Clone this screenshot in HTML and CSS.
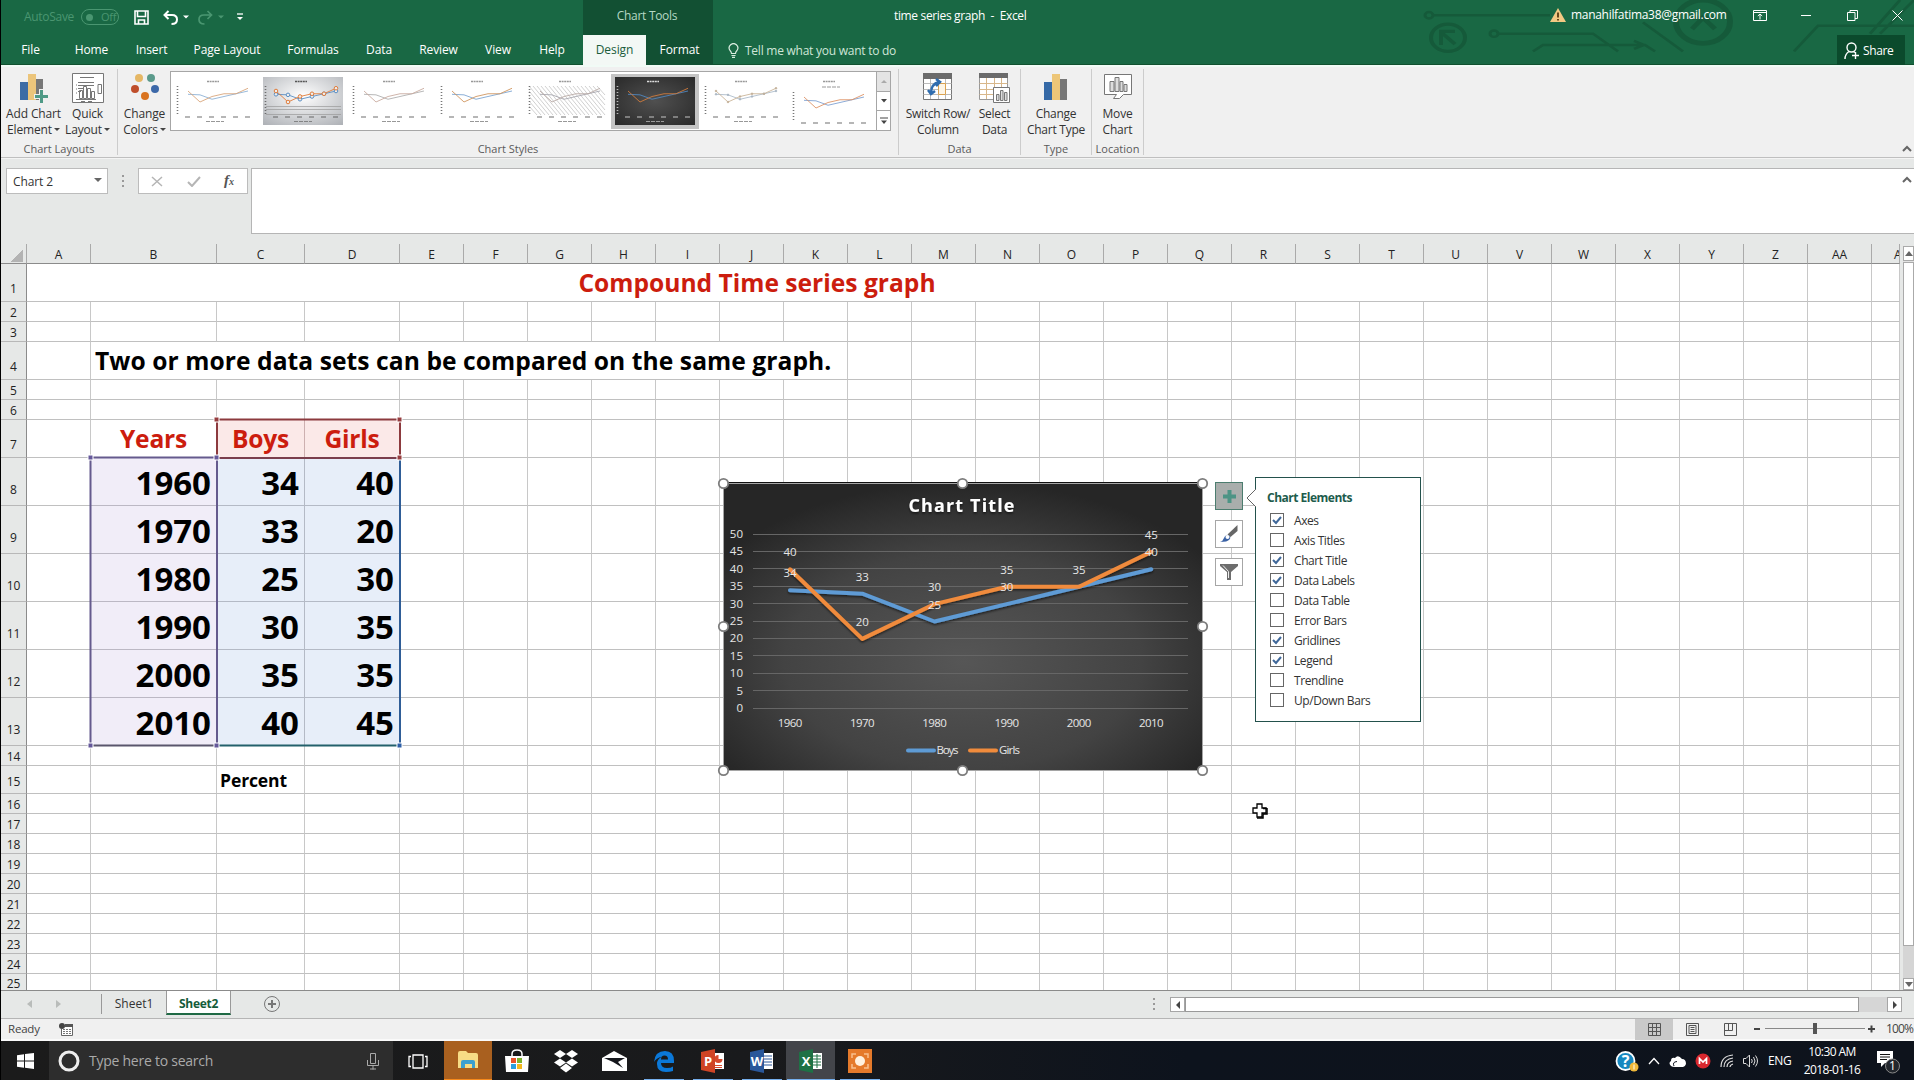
FILE: index.html
```html
<!DOCTYPE html>
<html lang="en">
<head>
<meta charset="utf-8">
<title>time series graph - Excel</title>
<link rel="stylesheet" href="styles.css">
</head>
<body>
<div class="app">
  <header class="top">
    <svg class="circuit" width="514" height="65" viewBox="1400 0 514 81" preserveAspectRatio="none" fill="none" stroke="#155a3a" stroke-width="3">
      <circle cx="1429" cy="19" r="4"/><path d="M1433 19H1550"/><circle cx="1448" cy="47" r="17" stroke-width="4"/><path d="M1441 56V39H1455M1441 40l14 15" stroke-width="4"/>
      <circle cx="1494" cy="42" r="4"/><path d="M1498 42H1593L1618 64M1533 64l10-8H1645l10 8M1634 51l10 5-10 5M1643 28l40 36"/>
      <circle cx="1703" cy="27" r="27" stroke-width="6"/><path d="M1692 36l11-14 12 14M1692 22h22" stroke-width="5"/><path d="M1794 64l24-32H1914M1870 42l30-42M1880 42l34-42"/>
    </svg>
    <div class="quick">
      <span class="autosave">AutoSave</span><span class="toggle"><i></i>Off</span>
      <svg class="q-save" width="15" height="15" viewBox="0 0 15 15" fill="none" stroke="#fff" stroke-width="1.6"><path d="M1 1h13v13H1zM3.5 1v5.5h8V1M4.5 14v-4h6v4"/></svg>
      <svg class="q-undo" width="29" height="15" viewBox="0 0 29 15"><path d="M5.500 1L1.500 5l4 4M2 5h7q5 0 5 4.500T8.500 14" fill="none" stroke="#fff" stroke-width="2"/><path d="M20 5.500h6l-3 3z" fill="#fff"/></svg>
      <svg class="q-redo" width="29" height="15" viewBox="0 0 29 15"><path d="M9.500 1l4 4-4 4M13 5H6Q1 5 1 9.500T6.500 14" fill="none" stroke="#4a9671" stroke-width="1.700"/><path d="M20 5.500h6l-3 3z" fill="#4a9671"/></svg>
      <svg class="q-more" width="6" height="8" viewBox="0 0 6 8"><path d="M0 1h6" stroke="#fff" stroke-width="1.300"/><path d="M0 4h6L3 7z" fill="#fff"/></svg>
    </div>
    <div class="context">Chart Tools</div>
    <div class="doc-title">time series graph&nbsp; -&nbsp; Excel</div>
    <div class="account">
      <svg width="16" height="14" viewBox="0 0 16 14"><path d="M8 0l8 14H0z" fill="#f3c983"/><path d="M8 4.500v5M8 11v1.500" stroke="#5a3a10" stroke-width="1.800"/></svg>
      <span>manahilfatima38@gmail.com</span>
    </div>
    <div class="window-btns">
      <svg width="14" height="11" viewBox="0 0 14 11" fill="none" stroke="#fff"><path d="M.5.5h13v10H.5zM.5 2.500h13M7 9.500V4M4.800 6L7 4l2.200 2"/></svg>
      <svg width="11" height="11" viewBox="0 0 11 11" stroke="#fff"><path d="M0 5.500h10"/></svg>
      <svg width="11" height="11" viewBox="0 0 11 11" fill="none" stroke="#fff"><path d="M.5 2.500h7.500v8H.5zM3 2.500v-2h7.500v8H8"/></svg>
      <svg width="11" height="11" viewBox="0 0 11 11" stroke="#fff"><path d="M.5.5l10 10M10.500.5l-10 10"/></svg>
    </div>
    <nav class="tabs">
      <span>File</span><span>Home</span><span>Insert</span><span>Page Layout</span><span>Formulas</span><span>Data</span><span>Review</span><span>View</span><span>Help</span><b></b><span class="active">Design</span><span class="ctx">Format</span>
      <div class="tell"><svg width="11" height="15" viewBox="0 0 11 15" fill="none" stroke="#d9ecdf" stroke-width="1.200"><path d="M3.500 10.500Q3.500 9 2 7.500A4.300 4.300 0 1 1 9 7.500Q7.500 9 7.500 10.500zM3.500 12.500h4M4 14.300h3"/></svg>Tell me what you want to do</div>
      <div class="share"><svg width="16" height="18" viewBox="0 0 16 18" fill="none" stroke="#fff" stroke-width="1.400"><circle cx="7.500" cy="5.500" r="4.500"/><path d="M1 17q0-5 4-7.500M9.500 9.500l1.500 1M11.500 10v7M8 13.500h7"/></svg>Share</div>
    </nav>
  </header>

  <section class="ribbon">
    <div class="group g1">
      <div class="btns">
        <div class="btn"><svg width="30" height="32" viewBox="0 0 30 32"><path d="M1 9h8v18H1z" fill="#3d6ca5"/><path d="M9 1h8v26H9z" fill="#ecc57b"/><path d="M17 6h7v21h-7z" fill="#777"/><path d="M20 16h5v5h5v5h-5v5h-5v-5h-5v-5h5z" fill="#f0f0f0"/><path d="M21 17h3v5h5v3h-5v5h-3v-5h-5v-3h5z" fill="#4f9a86"/></svg><span>Add Chart<br>Element <i></i></span></div>
        <div class="btn"><svg width="32" height="32" viewBox="0 0 32 32" fill="none" stroke="#777"><path d="M.5.500h31v29H.500z" fill="#fff"/><path d="M8 4.500h14M6 9.500h16M6 12.500h16M6 15.500h5M6 18.500h3M4 26.500h20M9 28.500h4M16 28.500h4M4 12h1M4 16h1M4 20h1"/><path d="M7.500 17.500h3v8h-3zM11.500 13.500h3v12h-3zM15.500 15.500h3v10h-3zM19.500 18.500h3v7h-3zM26 11.500h3.500v9H26z"/></svg><span>Quick<br>Layout <i></i></span></div>
      </div>
      <em>Chart Layouts</em>
    </div>
    <div class="group g2">
      <div class="btns">
        <div class="btn"><svg width="30" height="32" viewBox="0 0 30 32"><circle cx="9" cy="5" r="4" fill="#e5b765"/><circle cx="21" cy="5" r="4" fill="#5b9a8b"/><circle cx="5" cy="16" r="4" fill="#bf4e2b"/><circle cx="25" cy="16" r="4" fill="#3c68a8"/><circle cx="15" cy="23" r="4" fill="#d9731f"/></svg><span>Change<br>Colors <i></i></span></div>
        <div class="gallery"><div class="thumbs" id="thumbs"></div>
          <div class="gscroll"><b class="off"><svg width="6" height="4"><path d="M0 4l3-3 3 3z" fill="#aaa"/></svg></b><b><svg width="6" height="4"><path d="M0 0h6L3 3.500z" fill="#444"/></svg></b><b><svg width="8" height="8"><path d="M0 1h8" stroke="#444"/><path d="M1 3.500h6L4 7z" fill="#444"/></svg></b></div>
        </div>
      </div>
      <em>Chart Styles</em>
    </div>
    <div class="group g3">
      <div class="btns">
        <div class="btn"><svg width="30" height="32" viewBox="0 0 30 32" fill="none"><path d="M.5.500h28v26H.500z" fill="#fff" stroke="#777"/><path d="M0 0h29v6H0z" fill="#6b6b6b"/><path d="M.5 10.500h28M.5 16.500h28M.5 21.500h28M7.500 6v20M15.500 6v20M22.500 6v20" stroke="#bbb"/><path d="M15.500 10.500h7v11h-7z" stroke="#dba24f" fill="#fdf5e6"/><path d="M8 20q0-9 8-11M13 6l4 3-4 4M5 17l3 4 4-3" stroke="#2f6cae" stroke-width="2.500"/></svg><span>Switch Row/<br>Column</span></div>
        <div class="btn"><svg width="31" height="32" viewBox="0 0 31 32" fill="none"><path d="M.5.500h28v26H.500z" fill="#fff" stroke="#999"/><path d="M0 0h29v5H0z" fill="#6b6b6b"/><path d="M.5 10.500h28M.5 16.500h28M.5 21.500h28M7.500 5v21M15.500 5v21M22.500 5v21" stroke="#d8b78a"/><path d="M14.500 14.500h16v15h-16z" fill="#fff" stroke="#777"/><path d="M17.500 21.500h2.500v6h-2.500zM21.500 17.500H24v10h-2.500zM25.500 19.500H28v8h-2.500z" stroke="#777" fill="#ddd"/></svg><span>Select<br>Data</span></div>
      </div>
      <em>Data</em>
    </div>
    <div class="group g4">
      <div class="btns"><div class="btn"><svg width="24" height="32" viewBox="0 0 24 32"><path d="M0 9h8v18H0z" fill="#3569a6"/><path d="M8 1h8v26H8z" fill="#edc678"/><path d="M16 6h7v21h-7z" fill="#777"/></svg><span>Change<br>Chart Type</span></div></div>
      <em>Type</em>
    </div>
    <div class="group g5">
      <div class="btns"><div class="btn"><svg width="28" height="32" viewBox="0 0 28 32" fill="none" stroke="#777"><path d="M.5 1.500h27v20h-8l-4 4H9.500l3-4H.5z" fill="#fff"/><path d="M6 8.500h4v10H6zM11 4.500h4v14h-4zM16 8.500h3v10h-3zM20 11.500h3v7h-3z" fill="#ddd"/></svg><span>Move<br>Chart</span></div></div>
      <em>Location</em>
    </div>
    <svg class="collapse" width="10" height="7" viewBox="0 0 10 7"><path d="M1 6l4-4 4 4" fill="none" stroke="#666" stroke-width="2"/></svg>
  </section>

  <section class="formula">
    <div class="namebox">Chart 2<i></i></div>
    <div class="dots"><i></i><i></i><i></i></div>
    <div class="fxbox">
      <svg width="12" height="11" viewBox="0 0 12 11"><path d="M1 1l10 9M11 1L1 10" stroke="#b5b5b5" stroke-width="1.500"/></svg>
      <svg width="14" height="11" viewBox="0 0 14 11"><path d="M1 6l4 4 8-9" fill="none" stroke="#b5b5b5" stroke-width="2"/></svg>
      <span>f<small>x</small></span>
    </div>
    <div class="input"><svg width="10" height="7" viewBox="0 0 10 7"><path d="M1 6l4-4 4 4" fill="none" stroke="#666" stroke-width="2"/></svg></div>
  </section>

  <main class="sheet">
    <table id="grid"></table>
    <div class="vscroll">
      <b><svg width="8" height="5"><path d="M0 5l4-5 4 5z" fill="#666"/></svg></b><div class="vthumb"></div><div class="vtrack"></div><b><svg width="8" height="5"><path d="M0 0h8L4 5z" fill="#666"/></svg></b>
    </div>

    <svg class="ranges" width="320" height="340" viewBox="85 415 320 340" fill="none" stroke-width="2">
      <path d="M217 457V419.500H400V457" stroke="#8c3a3e"/><path d="M217 458H400" stroke="#7a3e4c"/>
      <path d="M90.500 745V457.500H217M217 458V745" stroke="#655a8d"/><path d="M90 745.500H217" stroke="#5a566c"/>
      <path d="M400 458V745" stroke="#2f5d97"/><path d="M217 745.500H400" stroke="#23606b"/>
      <g stroke="#fff" stroke-width="1"><path d="M214 417h5v5h-5zM397 417h5v5h-5zM397 455h5v5h-5z" fill="#963c3e"/><path d="M88 455h5v5h-5zM214 455h5v5h-5zM88 743h5v5h-5zM214 743h5v5h-5z" fill="#65589a"/><path d="M397 743h5v5h-5z" fill="#2d5ea6"/></g>
    </svg>

    <svg class="chart" width="492" height="300" viewBox="717 477 492 300">
      <defs><radialGradient id="dark" cx=".5" cy=".62" r=".62"><stop offset="0" stop-color="#565656"/><stop offset=".6" stop-color="#434343"/><stop offset="1" stop-color="#262626"/></radialGradient>
      <filter id="sh" x="-10%" y="-20%" width="120%" height="150%"><feDropShadow dx="0" dy="1.500" stdDeviation="1.200" flood-color="#000" flood-opacity=".6"/></filter></defs>
      <rect x="723" y="482" width="480" height="289" fill="url(#dark)"/>
      <path d="M723 482.500H1203" stroke="#111"/><path d="M723.500 483.500H1202.500V770.500H723.500z" fill="none" stroke="#a5a5a5"/>
      <g id="plot"></g>
    </svg>

    <div class="side">
      <b class="on"><svg width="15" height="15" viewBox="0 0 15 15"><path d="M5.500 1h4v4.500H14v4H9.500V14h-4V9.500H1v-4h4.500z" fill="#4d9485"/></svg></b>
      <b><svg width="20" height="18" viewBox="0 0 20 18"><path d="M18.500 0v6l-7 6-3-2.500z" fill="#666"/><path d="M1 17q3-1 4-4t4.500-3q3 2 1 4.500T1 17z" fill="#3b62a5"/><circle cx="8.500" cy="12" r="2" fill="#fff"/></svg></b>
      <b><svg width="20" height="18" viewBox="0 0 20 18"><path d="M1 1h18v2l-7 6v8H8V9L1 3z" fill="#6d6d6d"/><path d="M4 2.500l5.500 6V15" fill="none" stroke="#eee"/></svg></b>
    </div>
    <div class="panel">
      <svg class="tip" width="10" height="18" viewBox="0 0 10 18"><path d="M10 0L1 9l9 9" fill="#fff" stroke="#666"/></svg>
      <h3>Chart Elements</h3>
      <ul id="elements"></ul>
    </div>
    <svg class="cursor" width="16" height="16" viewBox="0 0 16 16"><path d="M5 1h5v4h4v5h-4v4H5v-4H1V5h4z" fill="#fff" stroke="#000" stroke-width="1.300"/><path d="M11 5.500h4M15 5v6h-4v4H5" stroke="#000" stroke-width="1.500" fill="none"/></svg>
  </main>

  <section class="sheettabs">
    <div class="arrows"><svg width="34" height="8" viewBox="0 0 34 8"><path d="M5 0v8L0 4zM29 0v8l5-4z" fill="#b9bcba"/></svg></div>
    <span class="tab">Sheet1</span><span class="tab cur">Sheet2</span>
    <svg class="add" width="18" height="18" viewBox="0 0 18 18" fill="none" stroke="#777"><circle cx="9" cy="9" r="7.500"/><path d="M9 5v8M5 9h8" stroke-width="2"/></svg>
    <div class="dots"><i></i><i></i><i></i></div>
    <div class="hscroll"><b><svg width="4" height="8"><path d="M4 0v8L0 4z" fill="#444"/></svg></b><div class="hthumb"></div><div class="htrack"></div><b><svg width="4" height="8"><path d="M0 0v8l4-4z" fill="#444"/></svg></b></div>
  </section>

  <footer class="status">
    <span class="ready">Ready</span>
    <svg class="macro" width="14" height="13" viewBox="0 0 14 13"><path d="M2.500 6v6.500h11V1.500H6" fill="#fff" stroke="#666"/><path d="M6 1h8v3H6z" fill="#555"/><circle cx="3" cy="3" r="3" fill="#444"/><path d="M4 6.500h8M4 8.500h8M4 10.500h8" stroke="#777" stroke-dasharray="2 1"/></svg>
    <div class="views">
      <b class="on"><svg width="13" height="13" viewBox="0 0 13 13" fill="none" stroke="#555"><path d="M.5.500h12v12H.500zM4.500.500v12M8.500.500v12M.5 4.500h12M.5 8.500h12"/></svg></b>
      <b><svg width="13" height="13" viewBox="0 0 13 13" fill="none" stroke="#555"><path d="M.5.500h12v12H.500zM3 2.500h7v8H3zM4.500 4.500h4M4.500 6.500h4M4.500 8.500h4"/></svg></b>
      <b><svg width="13" height="13" viewBox="0 0 13 13" fill="none" stroke="#555"><path d="M.5.500h12v12H.500zM4.500.500v7M8.500.500v7M.5 7.500h8"/></svg></b>
    </div>
    <svg class="zoomer" width="122" height="12" viewBox="0 0 122 12"><path d="M1 6h6M115 6h7M118.500 2.500v7" stroke="#444" stroke-width="2"/><path d="M12 5.500h100" stroke="#888"/><path d="M60 0h4v11h-4z" fill="#555"/></svg>
    <span class="pct">100%</span>
  </footer>

  <footer class="taskbar">
    <div class="start"><svg width="17" height="16" viewBox="0 0 17 16" fill="#fff"><path d="M0 2.300l7-1v6.200H0zM8 1.100L17 0v7.500H8zM0 8.500h7v6.200l-7-1zM8 8.500h9V16l-9-1.200z"/></svg></div>
    <div class="search"><svg width="22" height="22" viewBox="0 0 22 22"><circle cx="11" cy="11" r="9" fill="none" stroke="#eee" stroke-width="3"/></svg><span>Type here to search</span><svg width="12" height="17" viewBox="0 0 12 17" fill="none" stroke="#aaa"><path d="M3.500.5h5v10h-5zM.5 7v5.500h11V7M6 12.500v4M3 16h6"/></svg></div>
    <div class="tile"><svg width="20" height="15" viewBox="0 0 20 15" fill="none" stroke="#fff" stroke-width="1.300"><path d="M5 1h10v13H5zM3 2.500H1v10h2M17 2.500h2v10h-2"/></svg></div>
    <div class="tile explorer"><svg width="22" height="20" viewBox="0 0 22 20"><path d="M1 3q0-2 2-2h6l2 2h8q2 0 2 2v13H1z" fill="#f7dc85"/><path d="M4 18v-6q0-2 2-2h10q2 0 2 2v6h-3v-4H8v4z" fill="#3ba0d0"/></svg></div>
    <div class="tile"><svg width="24" height="24" viewBox="0 0 24 24"><path d="M7 8V5q0-4 5-4t5 4v3" fill="none" stroke="#fff" stroke-width="1.500"/><path d="M0 7h24l-1 16H1z" fill="#fff"/><path d="M6 9h5v5H6z" fill="#e8532b"/><path d="M12 9h5v5h-5z" fill="#7db32b"/><path d="M6 15h5v5H6z" fill="#2c9fe0"/><path d="M12 15h5v5h-5z" fill="#f4b81e"/></svg></div>
    <div class="tile"><svg width="24" height="23" viewBox="0 0 24 23" fill="#fff"><path d="M6 0l6 4-6 4-6-4zM18 0l6 4-6 4-6-4zM6 8.500l6 4-6 4-6-4zM18 8.500l6 4-6 4-6-4zM12 13.500l6 4.500-6 4.500L6 18z"/></svg></div>
    <div class="tile"><svg width="25" height="20" viewBox="0 0 25 20"><path d="M0 7l12-7 13 7v13H0z" fill="#fff"/><path d="M2 7h21l-7 4 5 6-10-6z" fill="#15171c"/></svg></div>
    <div class="tile run"><svg width="22" height="22" viewBox="0 0 22 22"><path d="M1 12Q2 1 12 1q9 0 9 10v2H8q0 5 6 5 4 0 6-1.500V21q-3 1-7 1-9 0-9-8 0-5 5-7.500Q3 8 1 12zM8 9.500h7q0-4-3.500-4T8 9.500z" fill="#0b78d8"/></svg></div>
    <div class="tile run"><svg width="24" height="24" viewBox="0 0 24 24"><path d="M12 4h11v16H12z" fill="#fff"/><path d="M14 16.500h7M14 18.500h7" stroke="#d6492c"/><path d="M17.500 6v4h4a4 4 0 1 1-4-4z" fill="#d6492c"/><path d="M0 3l14-3v24L0 21z" fill="#cf4425"/><text x="7" y="17" class="glyph">P</text></svg></div>
    <div class="tile run"><svg width="24" height="24" viewBox="0 0 24 24"><path d="M12 4h11v16H12z" fill="#fff"/><path d="M14 7h8M14 10h8M14 13h8M14 16h8" stroke="#2a579a"/><path d="M0 3l14-3v24L0 21z" fill="#2a579a"/><text x="7" y="17" class="glyph">W</text></svg></div>
    <div class="tile run cur"><svg width="24" height="24" viewBox="0 0 24 24"><path d="M12 4h11v16H12z" fill="#fff"/><path d="M14 7h8M14 10h8M14 13h8M14 16h8M18 5v14" stroke="#217346"/><path d="M0 3l14-3v24L0 21z" fill="#1e7145"/><text x="7" y="17" class="glyph">X</text></svg></div>
    <div class="tile run"><svg width="24" height="24" viewBox="0 0 24 24"><path d="M0 0h24v24H0z" fill="#e57a2b"/><path d="M4 9V5h4M16 5h4v4M20 15v4h-4M8 19H4v-4" fill="none" stroke="#f8c08e" stroke-width="1.500"/><circle cx="12" cy="12" r="5" fill="#fff1df"/></svg></div>
    <div class="tray">
      <svg width="24" height="22" viewBox="0 0 24 22"><circle cx="10.500" cy="11" r="9" fill="#1788c0" stroke="#fff" stroke-width="1.800"/><text x="10.500" y="17" class="q">?</text><circle cx="19" cy="17" r="4.500" fill="#f0b93a"/><path d="M19 14.500v5" stroke="#fff"/></svg>
      <svg width="12" height="8" viewBox="0 0 12 8"><path d="M1 7l5-5.500L11 7" fill="none" stroke="#fff" stroke-width="1.300"/></svg>
      <svg width="17" height="11" viewBox="0 0 17 11"><path d="M2 10Q-1 7 2 5q0-4 4-3 3-4 7 1 4 0 4 5-1 3-3 3H6Q3 11 2 10z" fill="#fff"/><path d="M5 10Q3 6 8 5.500" fill="none" stroke="#111722"/></svg>
      <svg width="16" height="16" viewBox="0 0 16 16"><circle cx="8" cy="8" r="7.500" fill="#d9272e"/><path d="M4.500 11V5.500L8 9l3.500-3.500V11" fill="none" stroke="#fff" stroke-width="1.700"/></svg>
      <svg width="14" height="14" viewBox="0 0 14 14" fill="none" stroke="#ddd" stroke-width="1.200"><path d="M1 13Q1 2 13 1M4 13q0-8 9-9M7 13q0-5 6-6M10 13q0-2 3-3"/></svg>
      <svg width="15" height="14" viewBox="0 0 15 14" fill="none" stroke="#ddd"><path d="M.5 4.500H3L6.500 1v12L3 9.500H.500zM8.500 5q1.500 2 0 4M10.500 3q3 4 0 8M12.500 1.500q4 5.500 0 11"/></svg>
      <span class="lang">ENG</span>
      <span class="clock">10:30 AM<br>2018-01-16</span>
      <svg width="26" height="26" viewBox="0 0 26 26"><path d="M1 3h16v12h-8l-4 4v-4H1z" fill="#fff"/><path d="M4 6.500h10M4 9h10M4 11.500h7" stroke="#111"/><circle cx="16.500" cy="18" r="7" fill="#22262c" stroke="#888"/><text x="16.500" y="22" class="n">1</text></svg>
    </div>
  </footer>
</div>
<script src="app.js"></script>
</body>
</html>
```
FILE: styles.css
```css
* { box-sizing: border-box; }
body { margin: 0; font: 12px/16px "Open Sans", "Noto Sans", sans-serif; color: #333; background: #e6e8e7; }
svg { display: block; flex: none; }
b, em, i { font-weight: normal; font-style: normal; }
.app { width: 1914px; height: 1080px; overflow: hidden; border-left: 1px solid #000; display: flex; flex-direction: column; position: relative; }

.top { height: 65px; flex: none; background: #196844; color: #fff; position: relative; display: grid; grid-template: 35px 30px / 582px 130px 1fr auto auto; border-bottom: 1px solid #11512f; }
.circuit { position: absolute; right: 0; top: 0; }
.quick { display: flex; align-items: center; padding: 0 0 1px 23px; color: #4a9671; }
.autosave { width: 57px; letter-spacing: -.3px; }
.toggle { width: 38px; height: 16px; border: 1px solid #4a9671; border-radius: 8px; display: flex; align-items: center; gap: 8px; padding-left: 4px; font-size: 11px; letter-spacing: -.3px; }
.toggle i { width: 7px; height: 7px; border-radius: 50%; background: #4a9671; }
.q-save { margin-left: 15px; }
.q-undo { margin-left: 14px; }
.q-redo { margin-left: 6px; }
.q-more { margin-left: 10px; }
.context { background: #125033; color: #b5d8c4; text-align: center; padding: 8px 2px 0 0; letter-spacing: -.3px; }
.doc-title { padding: 8px 0 0 181px; letter-spacing: -.35px; white-space: nowrap; }
.account { display: flex; gap: 5px; align-items: center; padding-bottom: 5px; position: relative; letter-spacing: -.3px; width: 179px; margin-right: 24px; white-space: nowrap; }
.window-btns { display: flex; align-items: center; justify-content: space-between; width: 161px; padding: 0 11px 5px 0; position: relative; }
.tabs { grid-column: 1 / -1; display: grid; grid-template-columns: 59px 63px 57px 94px 78px 54px 65px 54px 54px 4px 63px 67px 1fr 68px; position: relative; padding-right: 9px; line-height: 29px; text-align: center; letter-spacing: -.1px; }
.tabs .active { background: #f3f8f5; color: #1a5c3c; height: 31px; }
.tabs .ctx { background: #125033; }
.tell { display: flex; align-items: center; gap: 6px; padding-left: 15px; color: #cfe6d8; letter-spacing: -.25px; }
.share { background: #0b4a2c; display: flex; align-items: center; gap: 3px; padding-left: 7px; letter-spacing: -.4px; }

.ribbon { height: 93px; flex: none; background: #f0f0f0; border-top: 2px solid #f1fbf6; border-bottom: 1px solid #bfbfbf; display: flex; position: relative; padding-top: 2px; }
.group { border-right: 1px solid #ccc; height: 86px; display: flex; flex-direction: column; justify-content: space-between; }
.group em { text-align: center; color: #5a5a5a; font-size: 11px; line-height: 12px; }
.g1 { width: 117px; } .g2 { width: 781px; } .g3 { width: 122px; } .g4 { width: 71px; } .g5 { width: 52px; }
.btns { display: flex; }
.btn { display: flex; flex-direction: column; align-items: center; padding-top: 4px; white-space: nowrap; text-align: center; letter-spacing: -.15px; width: 53px; }
.btn svg { height: 32px; margin-bottom: 1px; }
.btn span { display: block; }
.btn i, .namebox i { display: inline-block; border: 3px solid transparent; border-top: 3px solid #444; border-bottom: 0; vertical-align: 3px; margin-left: -1px; }
.g1 .btns { padding-left: 6px; }
.g1 .btn + .btn { width: 55px; }
.g2 .btn { width: 51px; margin-left: 1px; }
.g3 .btn { width: 78px; letter-spacing: -.3px; } .g3 .btn + .btn { width: 35px; }
.g4 .btn { width: 70px; letter-spacing: -.25px; } .g5 .btn { width: 51px; }
.gallery { display: flex; border: 1px solid #a6a6a6; background: #fff; width: 721px; height: 60px; margin: 2px 0 0 0; }
.thumbs { display: flex; flex: 1; }
.thumb { width: 88px; padding: 5px 4px; height: 58px; }
.thumb.sel { background: #c4c4c4; height: 55px; margin-top: 2px; padding-top: 3px; }
.gscroll { width: 14px; border-left: 1px solid #a6a6a6; display: flex; flex-direction: column; }
.gscroll b { flex: 1; display: flex; align-items: center; justify-content: center; border-bottom: 1px solid #a6a6a6; }
.gscroll b:last-child { border: 0; }
.gscroll .off { background: #e4e4e4; }
.collapse { position: absolute; right: 2px; bottom: 5px; }

.formula { height: 86px; flex: none; background: #e6e8e7; border-top: 1px solid #f4f4f4; display: flex; padding: 9px 0 0 5px; }
.namebox { width: 102px; height: 26px; border: 1px solid #bcbcbc; background: #fff; padding: 0 6px; line-height: 25px; display: flex; justify-content: space-between; align-items: center; letter-spacing: -.1px; }
.namebox i { border-width: 4px 4px 0; border-top-color: #666; margin: -2px -1px 0 0; }
.dots { display: flex; flex-direction: column; gap: 3px; width: 2px; margin: 7px 14px; }
.dots i { width: 2px; height: 2px; background: #999; }
.fxbox { width: 110px; height: 26px; border: 1px solid #bcbcbc; background: #fff; display: flex; align-items: center; justify-content: space-between; padding: 0 13px 0 12px; }
.fxbox span { font: italic bold 15px/20px "Liberation Serif", serif; color: #555; }
.fxbox small { font-size: 10px; }
.input { flex: 1; height: 66px; margin-left: 3px; border: 1px solid #b5b5b5; border-right: 0; background: #fff; position: relative; }
.input svg { position: absolute; right: 2px; top: 7px; }

.sheet { height: 747px; flex: none; display: flex; position: relative; overflow: hidden; border-bottom: 1px solid #8b8b8b; }
#grid { table-layout: fixed; border-collapse: separate; border-spacing: 0; width: 1899px; height: 0; background: #fff; flex: none; }
#grid td, #grid th { padding: 0; border-right: 1px solid #c8c8c8; border-bottom: 1px solid #c0c0c0; overflow: hidden; white-space: nowrap; font-weight: normal; color: #222; line-height: 16px; }
#grid th { background: #e6e8e7; }
#grid thead th { border-right-color: #aaa; border-bottom-color: #8b8b8b; padding-top: 3px; text-align: center; }
#grid thead th:last-child { text-align: left; padding-left: 22px; }
#grid tbody th { border-right-color: #8b8b8b; border-bottom-color: #b8b8b8; vertical-align: bottom; text-align: center; }
#grid .h38 th { padding-bottom: 4px; }
#grid .h48 th { padding-bottom: 7px; }
#grid .h28 th { padding-bottom: 3px; }
#grid .h17 th { line-height: 12px; padding-top: 4px; }
#grid tbody td { font-weight: bold; color: #000; vertical-align: bottom; }
#grid tbody td.red { color: #cc1d0e; font-size: 24.6px; line-height: 36px; text-align: center; letter-spacing: -.2px; }
#grid tbody td.title { letter-spacing: 0; }
#grid tbody td.lead { font-size: 24.6px; line-height: 36px; padding-left: 4px; letter-spacing: .07px; }
#grid tbody td.num { font-size: 33px; line-height: 44px; text-align: right; padding-right: 5px; }
#grid tbody td.pink { background: #fbe9e8; border-right-color: #cdb0b0; }
#grid tbody td.lilac { background: #f1edf8; border-color: #bcb8c4; }
#grid tbody td.blue { background: #e7eef9; border-color: #b4bac6; }
#grid tbody td.pct-label { font-size: 17.5px; line-height: 26px; padding-left: 3px; letter-spacing: -.1px; }
.corner { display: block; width: 13px; height: 13px; margin: 0 3px 0 auto; background: linear-gradient(135deg, transparent 50%, #b3b3b3 50%); }
.vscroll { flex: 1; margin: 2px 0 0 3px; display: flex; flex-direction: column; background: #e2e2e2; }
.vscroll b { height: 15px; border: 1px solid #aaa; background: #fff; display: flex; align-items: center; justify-content: center; }
.vscroll b:last-child { height: 12px; }
.vthumb { height: 684px; border: 1px solid #aaa; background: #fff; margin-top: 1px; }
.vtrack { flex: 1; background: #d5d5d5; }
.ranges { position: absolute; left: 84px; top: 171px; }
.chart { position: absolute; left: 716px; top: 233px; }
.chart text { font: 11.5px "Open Sans", sans-serif; fill: #e6e6e6; text-anchor: middle; }
.chart .ctitle { font-size: 18px; font-weight: bold; fill: #fff; }
.side { position: absolute; left: 1214px; top: 238px; display: flex; flex-direction: column; gap: 10px; }
.side b { width: 28px; height: 28px; border: 1px solid #a6a6a6; background: #fff; display: flex; align-items: center; justify-content: center; }
.side .on { background: #a9aeac; border-color: #4c7d6f; }
.panel { position: absolute; left: 1254px; top: 233px; width: 166px; height: 245px; border: 1px solid #23514c; background: #fff; padding: 11px 0 0 11px; }
.tip { position: absolute; left: -10px; top: 11px; }
.panel h3 { margin: 0 0 4px; font-size: 12px; line-height: 18px; color: #1d5c4c; letter-spacing: -.5px; }
.panel ul { margin: 0; padding: 0 0 0 3px; list-style: none; letter-spacing: -.42px; }
.panel li { display: flex; gap: 10px; height: 20px; align-items: center; }
.panel li i { width: 14px; height: 14px; border: 1px solid #666; margin-top: -2px; }
.cursor { position: absolute; left: 1251px; top: 559px; }

.sheettabs { height: 28px; flex: none; background: #e6e8e7; border-bottom: 1px solid #b5b5b5; display: flex; align-items: flex-start; }
.arrows { width: 101px; height: 20px; border-right: 1px solid #999; margin-top: 3px; padding: 6px 0 0 26px; }
.tab { width: 64px; text-align: center; line-height: 26px; font-size: 12px; }
.cur.tab { width: 65px; height: 25px; background: #fff; border: 1px solid #999; border-width: 0 1px 2px; border-bottom-color: #1f6a45; color: #145c3a; font-weight: bold; letter-spacing: -.3px; margin-top: -1px; padding-top: 1px; }
.add { margin: 4px 0 0 32px; }
.sheettabs .dots { margin: 7px 15px 0 auto; }
.hscroll { width: 732px; height: 15px; margin: 6px 12px 0 0; display: flex; background: #d6d6d6; }
.hscroll b { width: 15px; border: 1px solid #a6a6a6; background: #fff; display: flex; align-items: center; justify-content: center; }
.hthumb { width: 674px; border: 1px solid #999; background: #fff; }
.htrack { flex: 1; }

.status { height: 22px; flex: none; background: #f0f0f0; border-bottom: 2px solid #fafafa; display: flex; align-items: center; color: #444; }
.ready { width: 58px; padding-left: 7px; letter-spacing: -.2px; font-size: 11.5px; }
.views { margin-left: auto; display: flex; height: 21px; }
.views b { width: 38px; display: flex; align-items: center; justify-content: center; }
.views .on { background: #c9c9c9; }
.zoomer { margin-left: 4px; }
.pct { width: 39px; padding-left: 11px; letter-spacing: -.9px; }

.taskbar { height: 40px; flex: none; background: linear-gradient(90deg, #1b1b1b, #191a1c 40%, #0d131d 62%, #0e131c); display: flex; align-items: stretch; color: #fff; }
.start { width: 48px; display: flex; align-items: center; justify-content: center; }
.search { width: 344px; background: #2d2d2d; display: flex; align-items: center; padding: 0 14px 0 9px; gap: 9px; color: #aaa; font-size: 14px; }
.search span { flex: 1; letter-spacing: -.25px; }
.tile { width: 49px; display: flex; align-items: center; justify-content: center; position: relative; }
.explorer { background: #a9601f; border-bottom: 2px solid #f78a1c; margin-left: 2px; width: 48px; }
.tile.run { border-bottom: 0; background: linear-gradient(#76b0ee, #76b0ee) center bottom / 40px 2px no-repeat; }
.tile.run.cur { background: linear-gradient(#76b0ee, #76b0ee) center bottom / 48px 2px no-repeat, #43454a; }
.glyph { font: bold 13px "Open Sans", sans-serif; fill: #fff; text-anchor: middle; }
.tray { margin-left: auto; display: flex; align-items: center; padding-right: 12px; gap: 9px; }
.q { font: bold 16px "Open Sans", sans-serif; fill: #fff; text-anchor: middle; }
.n { font: 12px "Open Sans", sans-serif; fill: #fff; text-anchor: middle; }
.lang { margin-left: 1px; width: 25px; letter-spacing: -.4px; }
.clock { line-height: 18px; text-align: center; width: 72px; letter-spacing: -.6px; margin: 0 -1px 0 -6px; }
```
FILE: app.js
```js
const $ = id => document.getElementById(id);
const boys = [34, 33, 25, 30, 35, 40], girls = [40, 20, 30, 35, 35, 45];
const years = [1960, 1970, 1980, 1990, 2000, 2010];

/* worksheet */
const letters = [...'ABCDEFGHIJKLMNOPQRSTUVWXYZ', 'AA', 'AB'];
const widths = { A: 64, B: 126, C: 88, D: 95, AB: 28 };
const heights = [38, 20, 20, 38, 20, 20, 38, 48, 48, 48, 48, 48, 48, 20, 28, 20, 20, 20, 20, 20, 20, 20, 20, 20, 17];
const cols = letters.map(l => `<col style="width:${widths[l] || 64}px">`).join('');
const blanks = n => '<td></td>'.repeat(n);
let html = `<colgroup><col style="width:26px">${cols}</colgroup><thead><tr style="height:20px"><th><span class="corner"></span></th>${letters.map(l => `<th>${l}</th>`).join('')}</tr></thead><tbody>`;
for (let r = 1; r <= 25; r++) {
  let cells = blanks(28);
  if (r === 1) cells = `<td class="red title" colspan="21">Compound Time series graph</td>${blanks(7)}`;
  if (r === 4) cells = `<td></td><td class="lead" colspan="10">Two or more data sets can be compared on the same graph.</td>${blanks(17)}`;
  if (r === 7) cells = `<td></td><td class="red">Years</td><td class="red pink">Boys</td><td class="red pink">Girls</td>${blanks(24)}`;
  if (r > 7 && r < 14) cells = `<td></td><td class="num lilac">${years[r - 8]}</td><td class="num blue">${boys[r - 8]}</td><td class="num blue">${girls[r - 8]}</td>${blanks(24)}`;
  if (r === 15) cells = `${blanks(2)}<td class="pct-label">Percent</td>${blanks(25)}`;
  const h = heights[r - 1];
  html += `<tr class="h${h}" style="height:${h}px"><th>${r}</th>${cells}</tr>`;
}
$('grid').innerHTML = html + '</tbody>';

/* chart */
const X = i => 790 + i * 72.25, Y = v => 708.5 - v * 3.48;
const line = (d, x, y) => d.map((v, i) => `${i ? 'L' : 'M'}${x(i)} ${y(v)}`).join('');
let p = '';
for (let v = 0; v <= 50; v += 5) p += `<path d="M753 ${Math.round(Y(v)) - .5}H1188" stroke="#666"/><text x="743" y="${Y(v) + 3.5}" style="text-anchor:end">${v}</text>`;
p += `<g filter="url(#sh)" fill="none" stroke-width="4" stroke-linejoin="round" stroke-linecap="round"><path d="${line(boys, X, Y)}" stroke="#5e9bd5"/><path d="${line(girls, X, Y)}" stroke="#f08b3c"/></g>`;
years.forEach((y, i) => {
  p += `<text x="${X(i)}" y="727" textLength="24.500">${y}</text>`;
  [boys, girls].forEach((d, k) => { if (!(i === 4 && k)) p += `<text x="${X(i)}" y="${Y(d[i]) - 13}">${d[i]}</text>`; });
});
p += `<text class="ctitle" x="961.500" y="512" textLength="106" filter="url(#sh)">Chart Title</text>
<path d="M908 750.500H934" stroke="#5e9bd5" stroke-width="4" stroke-linecap="round"/><text x="947.500" y="754" textLength="22">Boys</text>
<path d="M970 750.500H996" stroke="#f08b3c" stroke-width="4" stroke-linecap="round"/><text x="1009.500" y="754" textLength="21">Girls</text>`;
for (const x of [723.5, 962.5, 1202.5]) for (const y of [483.5, 626.5, 770.5])
  if (x !== 962.5 || y !== 626.5) p += `<circle cx="${x}" cy="${y}" r="4.700" fill="#fff" stroke="#7d7d7d" stroke-width="1.800"/>`;
$('plot').innerHTML = p;

/* chart elements list */
const items = { Axes: 1, 'Axis Titles': 0, 'Chart Title': 1, 'Data Labels': 1, 'Data Table': 0, 'Error Bars': 0, Gridlines: 1, Legend: 1, Trendline: 0, 'Up/Down Bars': 0 };
$('elements').innerHTML = Object.entries(items).map(([n, on]) => `<li><i>${on ? '<svg width="12" height="12"><path d="M2 6l3 3 5-6" fill="none" stroke="#40689a" stroke-width="2"/></svg>' : ''}</i>${n}</li>`).join('');

/* style gallery */
const styles = [
  { b: '#8fb2d6', g: '#d9a67c' }, { b: '#5b8fc4', g: '#e07c3a', mark: 1 }, { b: '#b0b0b0', g: '#c9aba0' }, { b: '#7ea6d2', g: '#d09660' },
  { b: '#a8a8b0', g: '#b9aaa6', hatch: 1 }, { b: '#4f86bd', g: '#cf7a3c', dark: 1 }, { b: '#aebccb', g: '#cbb59a', dots: 1 }, { b: '#7fa2d2', g: '#de9468', low: 1 }
];
$('thumbs').innerHTML = styles.map((s, n) => {
  const o = s.low ? 6 : 0, x = i => 13 + i * 12, y = v => 36 + o - v * .55, ink = s.dark ? '#ddd' : '#555';
  let g = '';
  if (s.dark) g += '<defs><radialGradient id="dk" r=".7"><stop offset="0" stop-color="#505050"/><stop offset="1" stop-color="#2a2a2a"/></radialGradient></defs><rect width="80" height="48" fill="url(#dk)"/>';
  if (s.mark) g += '<defs><radialGradient id="lt" cy=".4" r=".75"><stop offset="0" stop-color="#fff"/><stop offset="1" stop-color="#b0b3b8"/></radialGradient></defs><rect width="80" height="48" fill="url(#lt)"/><path d="M3 29.500h75M3 32.500h75M3 37.500h75" stroke="#999" stroke-width=".7"/>';
  if (s.hatch) g += '<path d="' + Array.from({ length: 14 }, (_, i) => `M${2 + i * 4} 9l24 29`).join('') + 'M2 14l20 24M2 19l16 19M2 24l12 14M2 29l8 9M58 9l20 24M62 9l16 19M66 9l12 14M70 9l8 9" stroke="#bbb" stroke-width=".7"/>';
  g += `<path d="M2.500 ${9 + o}V${38 + o}" stroke="${ink}" stroke-width="1.600" stroke-dasharray="1 2" opacity=".8"/><path d="M32 4.500h12" stroke="${ink}" stroke-width="1.600" stroke-dasharray="2 .6" opacity="${s.mark || s.dark ? 1 : .6}"/>`;
  g += `<path d="M10 ${40 + o}h66" stroke="${ink}" stroke-width="1.200" stroke-dasharray="5 7" opacity=".85"/><path d="M31 ${s.low ? 10 : 44.5}h18" stroke="${ink}" stroke-dasharray="4 1" opacity=".6"/>`;
  g += `<path d="${line(boys, x, y)}" stroke="${s.b}" fill="none" stroke-width=".9"/><path d="${line(girls, x, y)}" stroke="${s.g}" fill="none" stroke-width=".9"/>`;
  if (s.mark || s.dots) [[boys, s.b], [girls, s.g]].forEach(([d, c]) => d.forEach((v, i) => g += `<circle cx="${x(i)}" cy="${y(v)}" r="${s.mark ? 1.8 : .8}" fill="${s.mark ? '#eee' : '#999'}" stroke="${c}"/>`));
  return `<div class="thumb${s.dark ? ' sel' : ''}"><svg width="80" height="48">${g}</svg></div>`;
}).join('');
```
